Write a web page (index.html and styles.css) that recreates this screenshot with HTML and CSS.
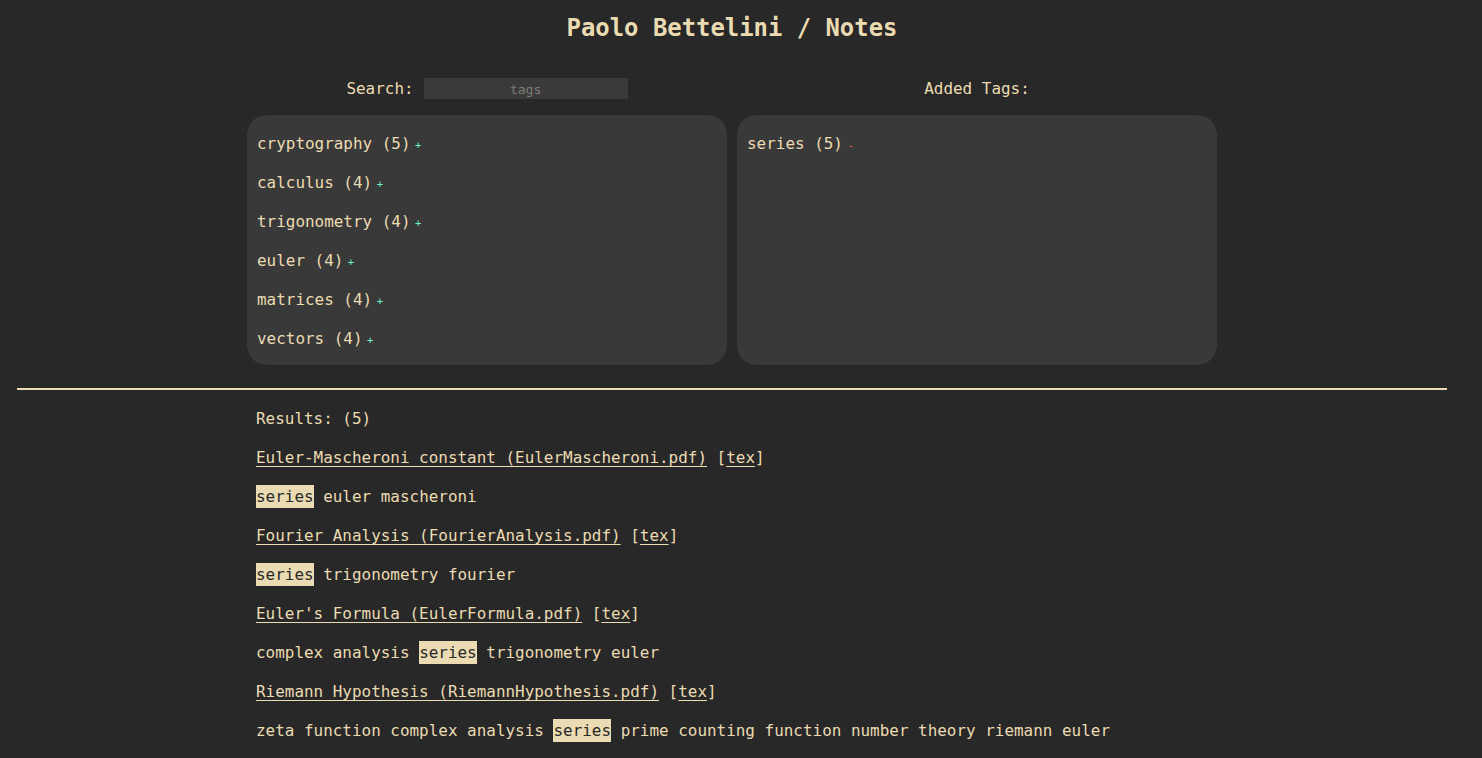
FILE: index.html
```html
<!DOCTYPE html>
<html>
<head>
<meta charset="utf-8">
<title>Paolo Bettelini / Notes</title>
<link rel="stylesheet" href="styles.css">
</head>
<body>
<div class="page">
  <h1 class="title">Paolo Bettelini / Notes</h1>
  <div class="columns">
    <div class="column">
      <div class="col-head">
        <span>Search:</span>
        <input class="search" type="text" placeholder="tags">
      </div>
      <div class="panel">
        <div class="tag">cryptography (5)<span class="add">+</span></div>
        <div class="tag">calculus (4)<span class="add">+</span></div>
        <div class="tag">trigonometry (4)<span class="add">+</span></div>
        <div class="tag">euler (4)<span class="add">+</span></div>
        <div class="tag">matrices (4)<span class="add">+</span></div>
        <div class="tag">vectors (4)<span class="add">+</span></div>
      </div>
    </div>
    <div class="column">
      <div class="col-head">
        <span>Added Tags:</span>
      </div>
      <div class="panel">
        <div class="tag">series (5)<span class="remove">-</span></div>
      </div>
    </div>
  </div>
  <hr class="divider">
  <div class="results">
    <div class="row">Results: (5)</div>
    <div class="row"><a href="#">Euler-Mascheroni constant (EulerMascheroni.pdf)</a> [<a href="#">tex</a>]</div>
    <div class="row"><span class="hl">series</span> euler mascheroni</div>
    <div class="row"><a href="#">Fourier Analysis (FourierAnalysis.pdf)</a> [<a href="#">tex</a>]</div>
    <div class="row"><span class="hl">series</span> trigonometry fourier</div>
    <div class="row"><a href="#">Euler's Formula (EulerFormula.pdf)</a> [<a href="#">tex</a>]</div>
    <div class="row">complex analysis <span class="hl">series</span> trigonometry euler</div>
    <div class="row"><a href="#">Riemann Hypothesis (RiemannHypothesis.pdf)</a> [<a href="#">tex</a>]</div>
    <div class="row">zeta function complex analysis <span class="hl">series</span> prime counting function number theory riemann euler</div>
  </div>
</div>
</body>
</html>
```
FILE: styles.css
```css
html, body {
  margin: 0;
  padding: 0;
  background: #282828;
}

body {
  font-family: "DejaVu Sans Mono", "Liberation Mono", monospace;
  font-size: 15.95px;
  color: #ebdbb2;
}

.page {
  width: 1464px;
  padding-bottom: 40px;
}

.title {
  margin: 0;
  padding-top: 14px;
  font-size: 23.9px;
  line-height: 28px;
  font-weight: bold;
  text-align: center;
}

.columns {
  display: flex;
  justify-content: center;
  gap: 10px;
  margin-top: 36px;
}

.column {
  width: 480px;
  display: flex;
  flex-direction: column;
}

.col-head {
  height: 21px;
  display: flex;
  align-items: center;
  justify-content: center;
  gap: 10px;
  line-height: 19px;
  margin-bottom: 16px;
}

.search {
  width: 204px;
  height: 21px;
  box-sizing: border-box;
  border: none;
  outline: none;
  background: #3a3a3a;
  color: #ebdbb2;
  font-family: "DejaVu Sans Mono", monospace;
  font-size: 13px;
  text-align: center;
  padding: 2px 4px 0;
}

.search::placeholder {
  color: #7d7b74;
}

.panel {
  height: 250px;
  box-sizing: border-box;
  background: #393939;
  border-radius: 20px;
  padding: 9px 10px 7px;
}

.tag {
  line-height: 39px;
  height: 39px;
}

.add,
.remove {
  font-size: 10.5px;
  margin-left: 4.5px;
}

.add {
  color: #72f2cc;
}

.remove {
  color: #e85a44;
}

.divider {
  border: none;
  border-top: 2px solid #ebdbb2;
  height: 0;
  margin: 23px 17px 0 17px;
}

.results {
  width: 952px;
  margin: 0 auto;
  padding-top: 9px;
}

.row {
  line-height: 39px;
  height: 39px;
  white-space: nowrap;
}

.row a {
  color: #ebdbb2;
  text-decoration: underline;
  text-underline-offset: 3px;
}

.hl {
  background: #ebdbb2;
  color: #282828;
  padding: 2px 0;
}
```
